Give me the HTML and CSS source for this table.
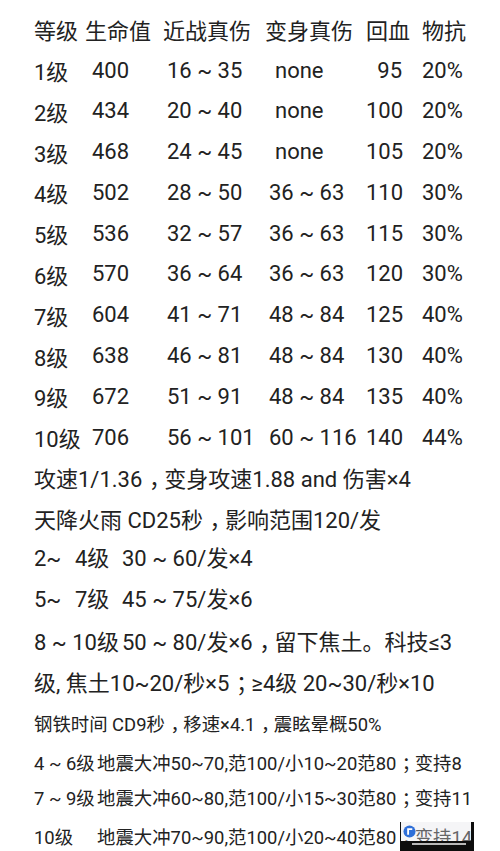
FILE: index.html
```html
<!DOCTYPE html>
<html lang="zh">
<head>
<meta charset="utf-8">
<title>等级数据</title>
<link rel="stylesheet" href="styles.css">
</head>
<body>
<div class="page">
  <div class="table">
    <div class="h">等级</div><div class="h">生命值</div><div class="h">近战真伤</div><div class="h">变身真伤</div><div class="h">回血</div><div class="h">物抗</div>

    <div>1级</div><div class="hp">400</div><div class="melee">16 ~ 35</div><div class="trans none">none</div><div class="regen">95</div><div>20%</div>
    <div>2级</div><div class="hp">434</div><div class="melee">20 ~ 40</div><div class="trans none">none</div><div class="regen">100</div><div>20%</div>
    <div>3级</div><div class="hp">468</div><div class="melee">24 ~ 45</div><div class="trans none">none</div><div class="regen">105</div><div>20%</div>
    <div>4级</div><div class="hp">502</div><div class="melee">28 ~ 50</div><div class="trans">36 ~ 63</div><div class="regen">110</div><div>30%</div>
    <div>5级</div><div class="hp">536</div><div class="melee">32 ~ 57</div><div class="trans">36 ~ 63</div><div class="regen">115</div><div>30%</div>
    <div>6级</div><div class="hp">570</div><div class="melee">36 ~ 64</div><div class="trans">36 ~ 63</div><div class="regen">120</div><div>30%</div>
    <div>7级</div><div class="hp">604</div><div class="melee">41 ~ 71</div><div class="trans">48 ~ 84</div><div class="regen">125</div><div>40%</div>
    <div>8级</div><div class="hp">638</div><div class="melee">46 ~ 81</div><div class="trans">48 ~ 84</div><div class="regen">130</div><div>40%</div>
    <div>9级</div><div class="hp">672</div><div class="melee">51 ~ 91</div><div class="trans">48 ~ 84</div><div class="regen">135</div><div>40%</div>
    <div>10级</div><div class="hp">706</div><div class="melee">56 ~ 101</div><div class="trans">60 ~ 116</div><div class="regen">140</div><div>44%</div>
  </div>

  <div class="line">攻速1/1.36<span class="p">，</span>变身攻速1.88 and 伤害×4</div>
  <div class="line">天降火雨 CD25秒<span class="p">，</span>影响范围120/发</div>
  <div class="line"><span class="lv"><span class="lvA">2~</span>4级</span>30 ~ 60/发×4</div>
  <div class="line"><span class="lv"><span class="lvA">5~</span>7级</span>45 ~ 75/发×6</div>
  <div class="line"><span class="lv">8 ~ 10级</span>50 ~ 80/发×6<span class="p">，</span>留下焦土。科技≤3</div>
  <div class="line">级, 焦土10~20/秒×5<span class="p">；</span>≥4级 20~30/秒×10</div>

  <div class="small s1">钢铁时间 CD9秒<span class="p">，</span>移速×4.1<span class="p">，</span>震眩晕概50%</div>
  <div class="small s2"><span class="slv">4 ~ 6级</span>地震大冲50~70,范100/小10~20范80<span class="p">；</span>变持8</div>
  <div class="small s3"><span class="slv">7 ~ 9级</span>地震大冲60~80,范100/小15~30范80<span class="p">；</span>变持11</div>
  <div class="small s4"><span class="slv">10级</span>地震大冲70~90,范100/小20~40范80<span class="p">；</span>变持14</div>

  <div class="wm">
    <div class="wm-top">
      <svg class="wm-logo" width="13" height="13" viewBox="0 0 14 14"><circle cx="7" cy="7" r="6.5" fill="#2f6fd8"/><path d="M4.5 3.5 L10 3.5 L10 5.5 L6.5 5.5 L6.5 10.5 L4.5 10.5 Z" fill="#ffffff"/></svg>
    </div>
    <div class="wm-bottom">
      <div class="wm-sub"></div>
    </div>
  </div>
</div>
</body>
</html>
```
FILE: styles.css
```css
html, body {
  margin: 0;
  padding: 0;
  background: #ffffff;
}
body {
  font-family: "Roboto", "Noto Sans CJK SC", sans-serif;
  color: #222222;
  font-size: 22px;
}
.page {
  position: relative;
  width: 500px;
  height: 851px;
  overflow: hidden;
  padding-top: 9px;
  box-sizing: border-box;
}
.table {
  display: grid;
  grid-template-columns: 51px 78px 102px 101px 56px 1fr;
  grid-auto-rows: 40.78px;
  align-items: center;
  padding-left: 34px;
  white-space: nowrap;
}
.hp { padding-left: 7px; }
.melee { padding-left: 4px; }
.trans { padding-left: 4px; }
.trans.none { padding-left: 10px; }
.regen { text-align: right; padding-right: 20px; }

.p {
  font-family: "Noto Sans CJK SC", sans-serif;
  font-feature-settings: "halt";
  padding: 0 0.2em 0 0.3em;
}
.line {
  height: 40.78px;
  line-height: 40.78px;
  padding-left: 34px;
  white-space: nowrap;
}
.lv {
  display: inline-block;
  width: 88px;
}
.lvA {
  display: inline-block;
  width: 41px;
}
.small {
  font-size: 18.4px;
  line-height: 26px;
  padding-left: 34px;
  white-space: nowrap;
}
.s1 { margin-top: 8px; }
.s2 { margin-top: 11px; }
.s3 { margin-top: 7px; }
.s4 { margin-top: 11px; }
.slv {
  display: inline-block;
  width: 63px;
}
.wm {
  position: absolute;
  left: 400px;
  top: 822px;
  width: 74px;
  height: 29px;
  display: flex;
  flex-direction: column;
}
.wm-top {
  display: flex;
  align-items: center;
  height: 19px;
  padding-left: 2px;
  border-left: 1px solid #111111;
  border-right: 3px solid #0d0d0d;
  background: rgba(225, 225, 232, 0.35);
}
.wm-bottom {
  flex: 1;
  background: #0d0d0d;
  padding-top: 2px;
}
.wm-sub {
  height: 2px;
  margin: 0 8px 0 12px;
  background: #b8b8b8;
}
```
